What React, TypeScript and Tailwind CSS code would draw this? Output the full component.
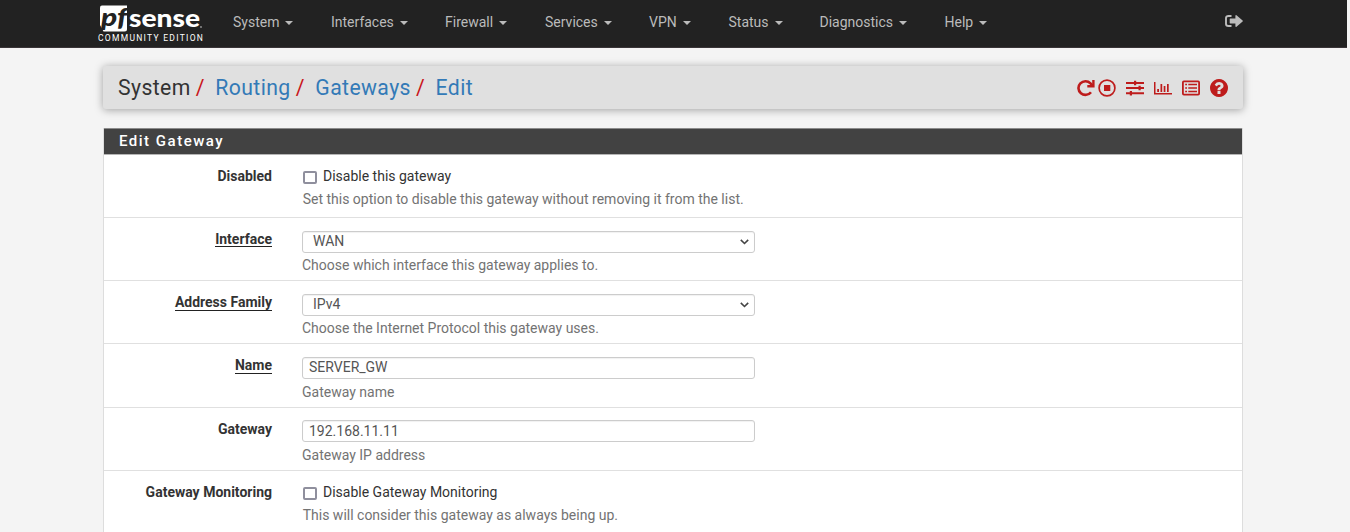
import React from "react";

const menus = [
  { label: "System", w: "w-[98px]" },
  { label: "Interfaces", w: "w-[114px]" },
  { label: "Firewall", w: "w-[100px]" },
  { label: "Services", w: "w-[104px]" },
  { label: "VPN", w: "w-[79.5px]" },
  { label: "Status", w: "w-[91px]" },
  { label: "Diagnostics", w: "w-[125px]" },
  { label: "Help", w: "w-[80px]" },
];

function Logo() {
  return (
    <div className="flex w-[106px] flex-col pt-[5px]">
      <svg className="h-[27px] w-[106px] overflow-visible" viewBox="0 0 106 27">
        <path d="M4 0.500H29V24Q29 26.500 26.500 26.500H5.500L2 20V2.500Q2 0.500 4 0.500Z" fill="#fff" />
        <text x="3" y="20.500" fontFamily="Lato" fontWeight="900" fontStyle="italic" fontSize="25" textLength="26" lengthAdjust="spacingAndGlyphs" fill="#222">pf</text>
        <text x="31" y="22" fontFamily="Lato" fontWeight="900" fontSize="25" textLength="71" lengthAdjust="spacingAndGlyphs" fill="#fff">sense</text>
        <circle cx="103" cy="22" r="0.900" fill="#999" />
      </svg>
      <span className="text-[8.5px] leading-[12px] tracking-[1.29px] whitespace-nowrap text-white">COMMUNITY EDITION</span>
    </div>
  );
}

const question =
  "M1024 1376v-192q0-14-9-23t-23-9h-192q-14 0-23 9t-9 23v192q0 14 9 23t23 9h192q14 0 23-9t9-23zm256-672q0-88-55.500-163t-138.500-116-170-41q-243 0-371 213-15 24 8 42l132 100q7 6 19 6 16 0 25-12 53-68 86-92 34-24 86-24 48 0 85.500 26t37.500 59q0 38-20 61t-68 45q-63 28-115.500 86.500t-52.500 125.500v36q0 14 9 23t23 9h192q14 0 23-9t9-23q0-19 21.500-49.500t54.500-49.500q32-18 49-28.500t46-35 44.500-48 28-60.500 12.500-81zm384 192q0 209-103 385.500t-279.500 279.500-385.500 103-385.500-103-279.500-279.500-103-385.500 103-385.500 279.500-279.500 385.500-103 385.500 103 279.500 279.500 103 385.500z";

function Actions() {
  const box = "h-[18px] w-[18px] shrink-0";
  return (
    <div className="flex gap-[10px] pt-px text-[#be1c1c]">
      <svg className={`${box} -mr-[7px]`} viewBox="0 0 18 18" fill="none" stroke="currentColor" strokeWidth="2.600">
        <path d="M14 13.200A7 6.800 0 1 1 13.500 4.300L15.500 6.500" />
        <path d="M16.400 1V7.300H10.300" strokeWidth="2.400" />
      </svg>
      <svg className={box} viewBox="0 0 18 18">
        <circle cx="9" cy="9" r="7.900" fill="none" stroke="currentColor" strokeWidth="1.700" />
        <rect x="6" y="6" width="6.300" height="6" fill="currentColor" />
      </svg>
      <svg className={box} viewBox="0 0 18 18" fill="currentColor">
        <path d="M0 3H18V5H0ZM0 8H18V10H0ZM0 13.200H18V15.200H0ZM8 1.700H10.200V6.300H8ZM12.500 6.700H14.700V11.300H12.500ZM3.800 11.900H6V16.500H3.800Z" />
      </svg>
      <svg className={box} viewBox="0 0 18 18" fill="currentColor">
        <path d="M0 3H1.500V14H18V15.600H0ZM3.200 10H5V13H3.200ZM6.500 5H8.200V13H6.500ZM9.700 7H11.400V13H9.700ZM13 5H14.700V13H13Z" />
      </svg>
      <svg className={box} viewBox="0 0 18 18" fill="currentColor">
        <rect x="0.900" y="2.400" width="16.200" height="13.200" rx="1" fill="none" stroke="currentColor" strokeWidth="1.800" />
        <path d="M3.200 4.700H5V6.200H3.200ZM6.300 4.700H15V6.200H6.300ZM3.200 8.300H5V9.800H3.200ZM6.300 8.300H15V9.800H6.300ZM3.200 11.800H5V13.300H3.200ZM6.300 11.800H15V13.300H6.300Z" />
      </svg>
      <svg className={box} viewBox="128 128 1536 1536" fill="currentColor">
        <path d={question} />
      </svg>
    </div>
  );
}

function Row({ label, required, help, children }: { label: string; required?: boolean; help: string; children: React.ReactNode }) {
  return (
    <div className="flex h-[63.3px] border-b border-[#e0e0e0] pt-[12.1px]">
      <div className="-mt-[0.2px] flex w-[168px] justify-end font-bold leading-[18px] text-[#333]">
        <span className={required ? "h-[17.6px] border-b border-[#222]" : "h-[18px]"}>{label}</span>
      </div>
      <div className="ml-[30px] w-[453px]">
        {children}
        <div className={`whitespace-nowrap leading-[18px] text-[#737373] ${required || label === "Gateway" ? "" : "pl-[0.7px]"}`}>{help}</div>
      </div>
    </div>
  );
}

function Check({ text }: { text: string }) {
  return (
    <div className="flex h-[23px] items-start pl-px leading-[18px] text-[#333]">
      <span className="mt-[4.1px] mr-[6px] h-[13px] w-[14px] rounded-[2px] border-2 border-[#8f8f9d] bg-white" />
      {text}
    </div>
  );
}

function Field({ value, select }: { value: string; select?: boolean }) {
  return (
    <div className={`mt-[0.6px] mb-[3.4px] flex h-[22px] items-center justify-between rounded-[3px] border border-[#ccc] bg-white pr-[5px] text-[#555] shadow-[inset_0_1px_1px_rgba(0,0,0,0.06)] ${select ? "pl-[10px]" : "pl-[6px]"}`}>
      <span className="pb-[1.8px] leading-[18px]">{value}</span>
      {select && (
        <svg className="mt-px h-[6px] w-[9px]" viewBox="0 0 9 6" fill="none" stroke="#444" strokeWidth="1.600">
          <path d="M0.800 0.900 4.500 4.500 8.200 0.900" />
        </svg>
      )}
    </div>
  );
}

function Slash() {
  return <span className="mr-[10.5px] ml-[5px] text-[#c9151b]">/</span>;
}

export default function App() {
  return (
    <div className="h-[532px] overflow-hidden bg-[#f4f4f4] font-['Roboto',sans-serif] text-[14px]">
      <nav className="flex h-[48px] w-[1347px] border-b border-[#3a3538] bg-[#222] pl-[98px] text-[#bbb]">
        <Logo />
        <div className="ml-[29px] flex pt-[12px] leading-[20px]">
          {menus.map((m) => (
            <div key={m.label} className={`flex items-center gap-[6px] self-start ${m.w}`}>
              {m.label}
              <span className="mt-[2px] border-x-4 border-t-4 border-x-transparent border-t-[#bbb]" />
            </div>
          ))}
        </div>
        <svg className="mt-[14px] mr-[104px] ml-auto h-[14px] w-[18px]" viewBox="0 0 18 14" fill="currentColor">
          <path d="M6.500 2H3.500Q1 2 1 4V10Q1 12 3.500 12H6.500" fill="none" stroke="currentColor" strokeWidth="1.900" />
          <path d="M5.300 4.600H10.400V1.700Q10.600 0.600 11.500 1.200L17.600 6.400Q18.200 7 17.600 7.600L11.500 12.800Q10.600 13.400 10.400 12.300V9.400H5.300Q4.700 9.400 4.700 8.800V5.200Q4.700 4.600 5.300 4.600Z" />
        </svg>
      </nav>
      <header className="mt-[18px] ml-[103px] flex h-[43px] w-[1140px] items-center justify-between rounded-[3px] bg-[#e0e0e0] px-[15px] shadow-[0_1px_8px_rgba(0,0,0,0.35)]">
        <div className="flex pt-px text-[21.2px] tracking-[0.4px] text-[#337ab7]">
          <span className="text-[#333]">System</span>
          <Slash />
          <span>Routing</span>
          <Slash />
          <span>Gateways</span>
          <Slash />
          <span>Edit</span>
        </div>
        <Actions />
      </header>
      <main className="mt-[19px] ml-[103px] w-[1140px] border-x border-[#ddd] bg-white">
        <h1 className="h-[26.6px] border-t border-b border-t-[#8c8c8c] border-b-[#b5b5b5] bg-[#424242] pl-[15px] text-[15px] leading-[25px] font-medium tracking-[1.5px] text-white">Edit Gateway</h1>
        <Row label="Disabled" help="Set this option to disable this gateway without removing it from the list."><Check text="Disable this gateway" /></Row>
        <Row label="Interface" required help="Choose which interface this gateway applies to."><Field select value="WAN" /></Row>
        <Row label="Address Family" required help="Choose the Internet Protocol this gateway uses."><Field select value="IPv4" /></Row>
        <Row label="Name" required help="Gateway name"><Field value="SERVER_GW" /></Row>
        <Row label="Gateway" help="Gateway IP address"><Field value="192.168.11.11" /></Row>
        <Row label="Gateway Monitoring" help="This will consider this gateway as always being up."><Check text="Disable Gateway Monitoring" /></Row>
      </main>
    </div>
  );
}
